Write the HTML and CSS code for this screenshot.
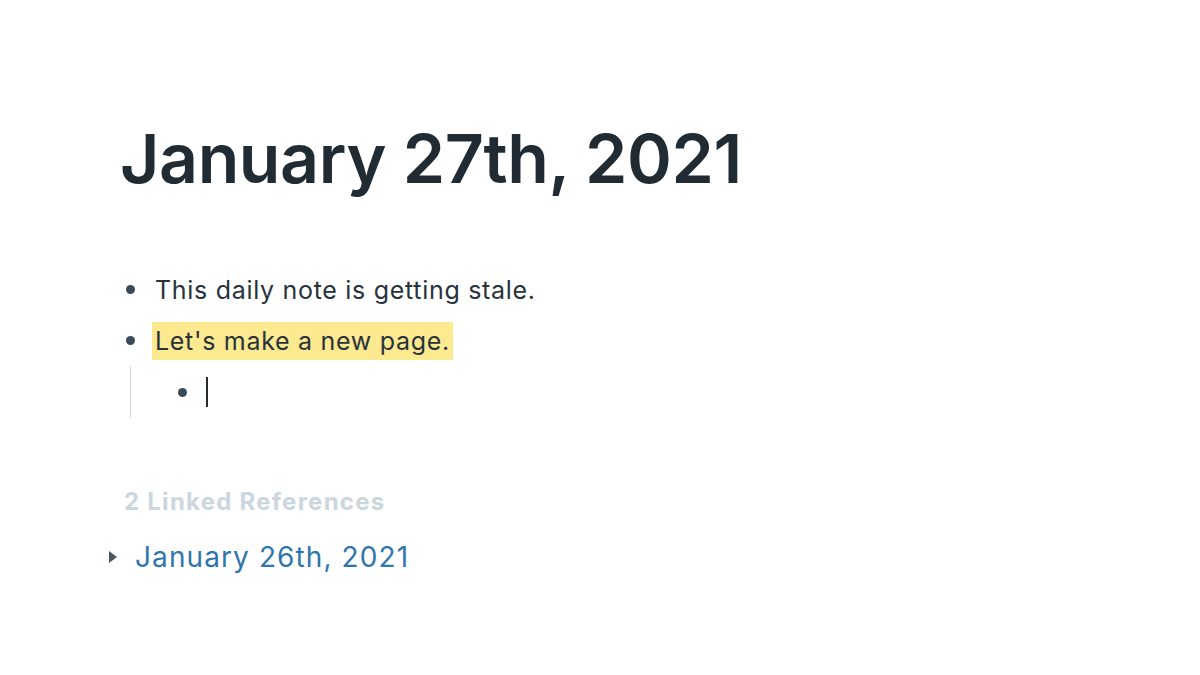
FILE: index.html
```html
<!DOCTYPE html>
<html lang="en">
<head>
    <meta charset="UTF-8">
    <title>January 27th, 2021</title>
    <link rel="stylesheet" href="styles.css">
</head>
<body>
    <div class="page">
        <h1 class="title">January 27th, 2021</h1>

        <div class="blocks">
            <div class="block">
                <span class="bullet"></span>
                <span class="text">This daily note is getting stale.</span>
            </div>
            <div class="block">
                <span class="bullet"></span>
                <span class="text highlight">Let's make a new page.</span>
            </div>
            <div class="children">
                <div class="block">
                    <span class="bullet"></span>
                    <span class="cursor"></span>
                </div>
            </div>
        </div>

        <div class="refs">
            <div class="refs-title">2 Linked References</div>
            <div class="ref">
                <span class="caret"></span>
                <a class="ref-link" href="#">January 26th, 2021</a>
            </div>
        </div>
    </div>
</body>
</html>
```

FILE: styles.css
```css
body {
    margin: 0;
    background: #fff;
    font-family: Inter, "Noto Sans", sans-serif;
    color: #202b33;
}
.page {
    padding: 118px 0 0 120px;
}
.title {
    margin: 0;
    font-size: 68px;
    font-weight: 600;
    letter-spacing: -0.4px;
    line-height: 80px;
}
.blocks {
    margin-top: 66px;
}
.block {
    display: flex;
    align-items: center;
    height: 51px;
}
.bullet {
    width: 9px;
    height: 9px;
    border-radius: 50%;
    background: #394b59;
    margin: 0 20px 0 6px;
    flex-shrink: 0;
}
.text {
    font-size: 25px;
    letter-spacing: 0.7px;
    color: #29333c;
    padding: 4px 3px;
    margin-left: -3px;
}
.highlight {
    background: #fde98f;
}
.children {
    border-left: 1px solid #d8dde2;
    margin-left: 10px;
    padding-left: 47px;
}
.children .block {
    height: 52px;
}
.children .bullet {
    margin-left: 0;
    margin-right: 19px;
}
.cursor {
    width: 2px;
    height: 30px;
    background: #202b33;
}
.refs {
    margin-top: 69px;
}
.refs-title {
    font-size: 24px;
    font-weight: 700;
    letter-spacing: 1.25px;
    color: #ccd6de;
    margin-left: 4px;
}
.ref {
    display: flex;
    align-items: center;
    margin-top: 24px;
    margin-left: -11px;
}
.caret {
    width: 0;
    height: 0;
    border-top: 6px solid transparent;
    border-bottom: 6px solid transparent;
    border-left: 8px solid #4a5660;
    margin-right: 18px;
}
.ref-link {
    font-size: 28px;
    letter-spacing: 1.1px;
    color: #2f76ad;
    text-decoration: none;
}
```
